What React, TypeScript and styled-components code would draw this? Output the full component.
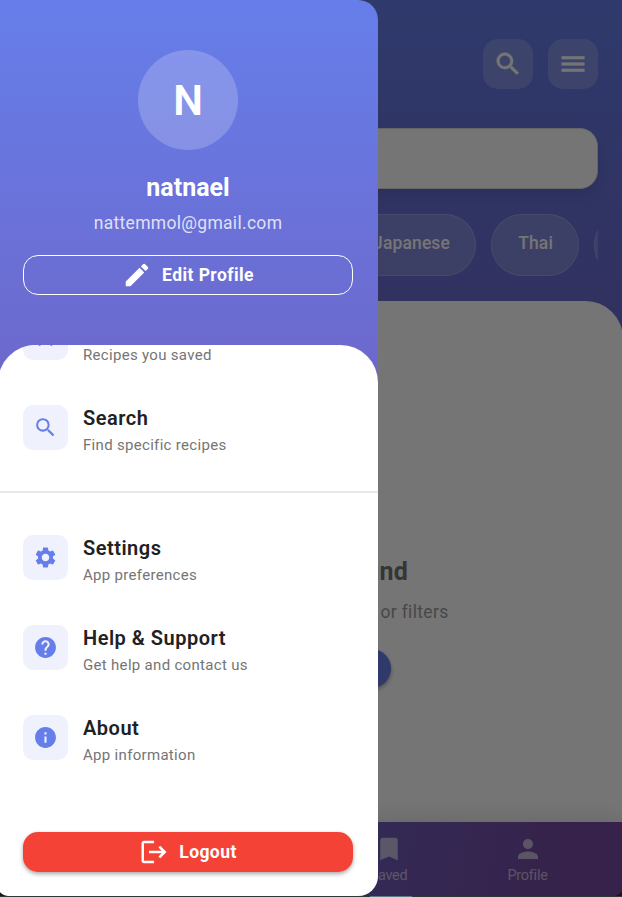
import React from "react";
import styled, { createGlobalStyle } from "styled-components";
import {
  MdBookmark,
  MdBookmarkBorder,
  MdEdit,
  MdHelp,
  MdInfo,
  MdLogout,
  MdMenu,
  MdPerson,
  MdSearch,
  MdSettings,
} from "react-icons/md";

const GlobalStyle = createGlobalStyle`
  *, *::before, *::after { box-sizing: border-box; }
  body {
    margin: 0;
    overflow: hidden;
    background: #34363a;
    font-family: Roboto, "Liberation Sans", sans-serif;
  }
  button { font-family: inherit; border: 0; padding: 0; }
  svg { display: block; flex: none; }
`;

const Window = styled.div`
  position: relative;
  width: 622px;
  height: 897px;
  overflow: hidden;
  background: linear-gradient(90deg, #34363a 370px, #5f7d86 370px, #5f7d86 412px, #34363a 412px);
`;

const Screen = styled.div`
  display: flex;
  flex-direction: column;
  width: 625px;
  height: 896px;
  margin-left: -2px;
  overflow: hidden;
  border-radius: 0 0 10px 10px;
  background: linear-gradient(#667eea, #764ba2);
`;

const TopBar = styled.header`
  display: flex;
  justify-content: flex-end;
  gap: 15px;
  padding: 39px 25px 0;
`;

const IconButton = styled.button`
  display: grid;
  place-items: center;
  width: 50px;
  height: 50px;
  border-radius: 15px;
  color: #fff;
  background: rgba(255, 255, 255, 0.2);

  path:not([fill="none"]) {
    stroke: currentColor;
    stroke-width: 0.5px;
  }
  path[fill="none"] {
    stroke: none;
  }
`;

const SearchField = styled.div`
  flex: none;
  height: 61px;
  margin: 39px 25px 0;
  border: 1px solid #dcdcdc;
  border-radius: 18px;
  background: #fff;
  box-shadow: 0 6px 18px rgba(0, 0, 0, 0.12);
`;

const Chips = styled.div`
  display: flex;
  flex: none;
  gap: 15px;
  margin: 25px 25px 25px 349px;
  overflow: hidden;
`;

const Chip = styled.div<{ $width: number }>`
  display: flex;
  flex: none;
  align-items: center;
  justify-content: flex-end;
  width: ${(p) => p.$width}px;
  height: 62px;
  padding: 0 25px 4px;
  border: 1px solid rgba(255, 255, 255, 0.2);
  border-radius: 31px;
  background: rgba(255, 255, 255, 0.18);
  color: #fff;
  font-size: 17.5px;
  font-weight: 500;
  letter-spacing: 0.12px;
`;

const Sheet = styled.main`
  display: flex;
  flex: 1;
  flex-direction: column;
  align-items: center;
  padding-top: 255px;
  border-radius: 37.5px 37.5px 0 0;
  background: #fff;
`;

const EmptyTitle = styled.h2`
  margin: 0;
  color: #757575;
  font-size: 25px;
  font-weight: 700;
  line-height: 32px;
  letter-spacing: 0.2px;
  white-space: nowrap;
`;

const EmptyHint = styled.p`
  margin: 12px 0 0;
  color: #9e9e9e;
  font-size: 17.5px;
  line-height: 24px;
  letter-spacing: 0.33px;
  white-space: nowrap;
`;

const EmptyAction = styled.button`
  width: 161px;
  height: 39px;
  margin-top: 25px;
  border-radius: 20px;
  background: #667eea;
  box-shadow: 0 2px 4px rgba(0, 0, 0, 0.35);
`;

const BottomNav = styled.nav`
  display: flex;
  flex: none;
  justify-content: flex-end;
  height: 74px;
  padding-right: 26px;
  background: linear-gradient(100deg, #667eea, #764ba2 90%);
  box-shadow: 0 -5px 20px rgba(0, 0, 0, 0.1);
`;

const NavItem = styled.div`
  display: flex;
  flex-direction: column;
  align-items: center;
  width: 139px;
  padding-top: 12px;
  color: rgba(255, 255, 255, 0.6);
  font-size: 14.5px;
  line-height: 20px;
  letter-spacing: -0.25px;

  span { margin-top: 2px; }
`;

const Scrim = styled.div`
  position: absolute;
  inset: 0 0 1px;
  background: rgba(0, 0, 0, 0.54);
`;

const Drawer = styled.aside`
  position: absolute;
  top: 0;
  left: -2px;
  display: flex;
  flex-direction: column;
  width: 380px;
  height: 896px;
  overflow: hidden;
  border-radius: 0 20px 20px 10px;
  background: linear-gradient(#667eea, #764ba2);
`;

const ProfileHeader = styled.section`
  display: flex;
  flex: none;
  flex-direction: column;
  align-items: center;
  height: 345px;
  padding: 50px 25px 0;
  color: #fff;
`;

const Avatar = styled.div`
  display: grid;
  place-items: center;
  width: 100px;
  height: 100px;
  border-radius: 50%;
  background: rgba(255, 255, 255, 0.2);
  font-size: 42px;
  font-weight: 600;
`;

const UserName = styled.div`
  margin-top: 22px;
  font-size: 25px;
  font-weight: 700;
  line-height: 32px;
`;

const Email = styled.div`
  margin-top: 7px;
  color: rgba(255, 255, 255, 0.8);
  font-size: 17.5px;
  line-height: 24px;
  letter-spacing: 0.3px;
`;

const WideButton = styled.button<{ $kind: "outline" | "danger" }>`
  display: flex;
  flex: none;
  align-items: center;
  justify-content: center;
  gap: 10px;
  width: 330px;
  height: 40px;
  border: ${(p) => (p.$kind === "outline" ? "1.25px solid #fff" : "0")};
  border-radius: 15px;
  background: ${(p) => (p.$kind === "outline" ? "transparent" : "#f44336")};
  box-shadow: ${(p) => (p.$kind === "outline" ? "none" : "0 2px 4px rgba(0, 0, 0, 0.35)")};
  color: #fff;
  font-size: 17.5px;
  font-weight: 700;
  letter-spacing: 0.42px;
`;

const HeaderAction = styled.div`
  margin-top: 20px;
`;

const MenuPanel = styled.section`
  display: flex;
  flex: 1;
  flex-direction: column;
  align-items: center;
  min-height: 0;
  padding-bottom: 24px;
  overflow: hidden;
  border-radius: 37.5px 37.5px 0 0;
  background: #fff;
`;

const MenuList = styled.div`
  flex: 1;
  width: 100%;
  margin-top: -53px;
`;

const MenuRow = styled.div`
  display: flex;
  align-items: center;
  gap: 15px;
  height: 90px;
  padding: 0 25px;
`;

const MenuIcon = styled.div`
  display: grid;
  place-items: center;
  width: 45px;
  height: 45px;
  border-radius: 10px;
  background: #eff2fd;
  color: #667eea;
`;

const MenuText = styled.div`
  display: flex;
  flex-direction: column;
  gap: 3px;
  padding-top: 4px;
`;

const MenuTitle = styled.div`
  color: #212121;
  font-size: 20px;
  font-weight: 600;
  line-height: 28px;
  letter-spacing: 0.5px;
`;

const MenuSubtitle = styled.div`
  color: #757575;
  font-size: 15px;
  line-height: 20px;
  letter-spacing: 0.31px;
`;

const Divider = styled.hr`
  height: 2px;
  margin: 19px 0;
  border: 0;
  background: #e8e8e8;
`;

type Entry = { icon: React.ReactNode; title?: string; subtitle: string };

const browse: Entry[] = [
  { icon: <MdBookmarkBorder size={23} />, title: "\u00a0", subtitle: "Recipes you saved" },
  { icon: <MdSearch size={25} />, title: "Search", subtitle: "Find specific recipes" },
];

const support: Entry[] = [
  { icon: <MdSettings size={25} />, title: "Settings", subtitle: "App preferences" },
  { icon: <MdHelp size={25} />, title: "Help & Support", subtitle: "Get help and contact us" },
  { icon: <MdInfo size={25} />, title: "About", subtitle: "App information" },
];

function MenuEntry({ icon, title, subtitle }: Entry) {
  return (
    <MenuRow>
      <MenuIcon>{icon}</MenuIcon>
      <MenuText>
        <MenuTitle>{title}</MenuTitle>
        <MenuSubtitle>{subtitle}</MenuSubtitle>
      </MenuText>
    </MenuRow>
  );
}

export default function App() {
  return (
    <Window>
      <GlobalStyle />
      <Screen>
        <TopBar>
          <IconButton><MdSearch size={30} /></IconButton>
          <IconButton><MdMenu size={30} /></IconButton>
        </TopBar>
        <SearchField />
        <Chips>
          <Chip $width={129}>Japanese</Chip>
          <Chip $width={88}>Thai</Chip>
          <Chip $width={100} />
        </Chips>
        <Sheet>
          <EmptyTitle>No recipes found</EmptyTitle>
          <EmptyHint>Try adjusting your search or filters</EmptyHint>
          <EmptyAction />
        </Sheet>
        <BottomNav>
          <NavItem><MdBookmark size={30} /><span>Saved</span></NavItem>
          <NavItem><MdPerson size={30} /><span>Profile</span></NavItem>
        </BottomNav>
      </Screen>
      <Scrim />
      <Drawer>
        <ProfileHeader>
          <Avatar>N</Avatar>
          <UserName>natnael</UserName>
          <Email>nattemmol@gmail.com</Email>
          <HeaderAction>
            <WideButton $kind="outline"><MdEdit size={30} />Edit Profile</WideButton>
          </HeaderAction>
        </ProfileHeader>
        <MenuPanel>
          <MenuList>
            {browse.map((entry) => <MenuEntry key={entry.subtitle} {...entry} />)}
            <Divider />
            {support.map((entry) => <MenuEntry key={entry.subtitle} {...entry} />)}
          </MenuList>
          <WideButton $kind="danger"><MdLogout size={30} />Logout</WideButton>
        </MenuPanel>
      </Drawer>
    </Window>
  );
}
